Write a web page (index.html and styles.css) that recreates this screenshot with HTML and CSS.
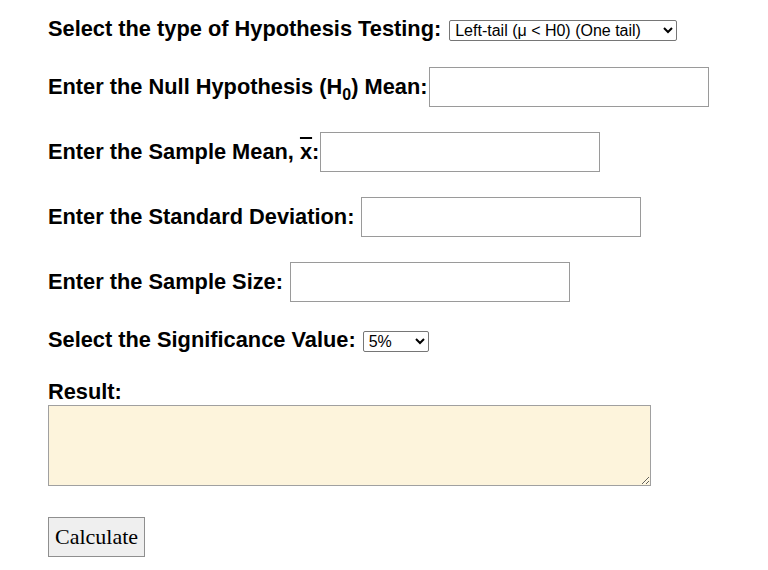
FILE: index.html
```html
<!DOCTYPE html>
<html lang="en">
  <head>
    <meta charset="UTF-8" />
    <meta name="viewport" content="width=device-width, initial-scale=1.0" />
    <title>Z Test Calculator</title>
    <link rel="stylesheet" href="styles.css">
  </head>
  <body>
    <form class="calc">
      <div class="row row-first">
        <label for="type">Select the type of Hypothesis Testing:</label>
        <select id="type" class="pick">
          <option>Left-tail (&mu; &lt; H0) (One tail)</option>
          <option>Right-tail (&mu; &gt; H0) (One tail)</option>
          <option>Two-tail (&mu; &ne; H0)</option>
        </select>
      </div>
      <div class="row">
        <label for="mu">Enter the Null Hypothesis (H<sub>0</sub>) Mean:</label><input id="mu" class="field" type="text" />
      </div>
      <div class="row">
        <label for="xbar">Enter the Sample Mean, <span class="bar">x</span>:</label><input id="xbar" class="field" type="text" />
      </div>
      <div class="row">
        <label for="sd">Enter the Standard Deviation: </label>
        <input id="sd" class="field" type="text" />
      </div>
      <div class="row">
        <label for="n">Enter the Sample Size: </label>
        <input id="n" class="field" type="text" />
      </div>
      <div class="row row-sig">
        <label for="alpha">Select the Significance Value:</label>
        <select id="alpha" class="pick pick-small">
          <option>5%</option>
          <option>1%</option>
          <option>10%</option>
        </select>
      </div>
      <label class="result-label" for="result">Result:</label>
      <textarea id="result" class="result"></textarea>
      <button type="button" class="btn">Calculate</button>
    </form>
  </body>
</html>
```

FILE: styles.css
```css
* {
  box-sizing: border-box;
}

body {
  margin: 0;
  padding: 20px 0 0 48px;
  background: #fff;
  font-family: "Liberation Sans", Arial, sans-serif;
  color: #000;
}

.calc {
  display: flex;
  flex-direction: column;
  align-items: flex-start;
}

.row {
  display: flex;
  align-items: center;
  height: 40px;
  margin-bottom: 25px;
  white-space: pre;
}

.row-first {
  height: 21px;
  margin-bottom: 26px;
}

.row-first label,
.row-sig label {
  margin-top: -3px;
}

.row-sig {
  height: 21px;
  margin-top: 4px;
  margin-bottom: 28px;
}

label {
  font-size: 21.8px;
  font-weight: bold;
}

sub {
  font-size: 16px;
  vertical-align: -6px;
  line-height: 0;
}

.bar {
  text-decoration: overline;
}

.field {
  width: 280px;
  height: 40px;
  margin-left: 1px;
  border: 1px solid #9a9a9a;
  border-radius: 0;
  background: #fff;
  font-size: 16px;
  padding: 2px 4px;
}

.pick {
  height: 21px;
  margin-left: 8px;
  width: 228px;
  font-family: "Liberation Sans", Arial, sans-serif;
  font-size: 16px;
  border: 1px solid #767676;
  border-radius: 2px;
  background: #fff;
  padding: 0 1px;
}

.pick-small {
  width: 66px;
  margin-left: 7px;
}

.result-label {
  display: block;
  line-height: 23px;
  margin-bottom: 2px;
}

.result {
  width: 603px;
  height: 81px;
  background: #fdf4dc;
  border: 1px solid #a0a0a0;
  resize: vertical;
  margin: 0 0 31px;
}

.btn {
  font-family: "Liberation Serif", "Times New Roman", serif;
  font-size: 22px;
  height: 40px;
  padding: 0 6px;
  background: #efefef;
  border: 1px solid #8f8f8f;
  border-radius: 0;
  color: #000;
}
```
